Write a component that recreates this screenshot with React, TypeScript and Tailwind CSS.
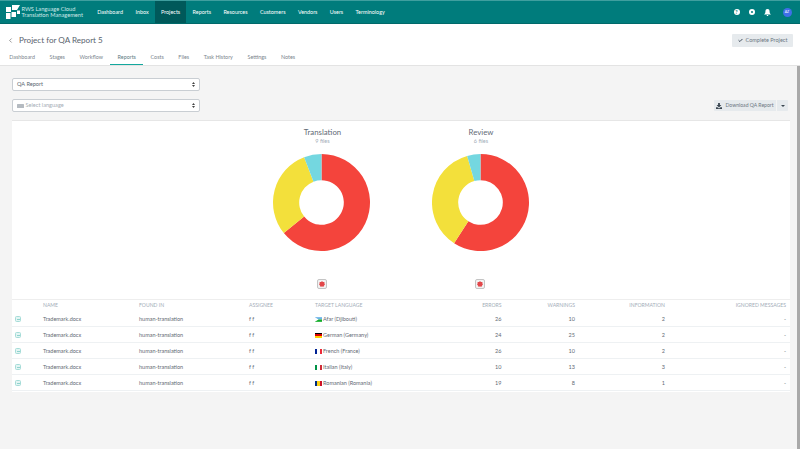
import React from 'react';
import { Check, ChevronLeft } from 'lucide-react';

const navItems = ['Dashboard', 'Inbox', 'Projects', 'Reports', 'Resources', 'Customers', 'Vendors', 'Users', 'Terminology'];
const tabs = ['Dashboard', 'Stages', 'Workflow', 'Reports', 'Costs', 'Files', 'Task History', 'Settings', 'Notes'];

const rows = [
  { flag: 'dj', language: 'Afar (Djibouti)', errors: 26, warnings: 10, info: 2 },
  { flag: 'de', language: 'German (Germany)', errors: 24, warnings: 25, info: 2 },
  { flag: 'fr', language: 'French (France)', errors: 26, warnings: 10, info: 2 },
  { flag: 'it', language: 'Italian (Italy)', errors: 10, warnings: 13, info: 3 },
  { flag: 'ro', language: 'Romanian (Romania)', errors: 19, warnings: 8, info: 1 },
];

// point on a circle, angle in degrees clockwise from the top
const polar = (r: number, deg: number) => {
  const a = (deg * Math.PI) / 180;
  return `${50 + r * Math.sin(a)} ${50 - r * Math.cos(a)}`;
};

const slice = (from: number, to: number) => {
  const large = to - from > 180 ? 1 : 0;
  return `M${polar(50, from)} A50 50 0 ${large} 1 ${polar(50, to)} L${polar(23, to)} A23 23 0 ${large} 0 ${polar(23, from)} Z`;
};

const Donut = ({ title, files, redEnd, yellowEnd }: { title: string; files: string; redEnd: number; yellowEnd: number }) => (
  <div className="w-[97px] flex flex-col items-center">
    <div className="ml-[2px] text-[7.8px] leading-[10px] text-[#5f6b76] whitespace-nowrap">{title}</div>
    <div className="ml-[2px] text-[5.5px] leading-[7px] mt-[1px] text-[#a3adb8] whitespace-nowrap">{files}</div>
    <svg viewBox="0 0 100 100" className="w-[97px] h-[97px] mt-[9px] shrink-0">
      <path d={slice(0, redEnd)} fill="#f4443c" />
      <path d={slice(redEnd, yellowEnd)} fill="#f3e03b" />
      <path d={slice(yellowEnd, 359.99)} fill="#74d7e0" />
    </svg>
    <div className="mt-[28px] w-[10px] h-[10px] rounded-[2px] border border-[#c4c4c4] bg-[#f2f2f2] flex items-center justify-center">
      <svg viewBox="0 0 10 10" className="w-[6px] h-[6px]">
        <path d="M5 0 L6.5 1.5 L9 1.5 L9 4 L10 5.5 L8.5 7.5 L7.5 9.5 L5 9 L2.5 9.5 L1.5 7.5 L0 5.5 L1 4 L1 1.5 L3.5 1.5 Z" fill="#e2474a" />
      </svg>
    </div>
  </div>
);

const Flag = ({ code }: { code: string }) => {
  if (code === 'dj') {
    return (
      <svg viewBox="0 0 12 8" className="w-[7px] h-[5px]">
        <rect width="12" height="4" fill="#6ab2e7" />
        <rect y="4" width="12" height="4" fill="#12ad2b" />
        <path d="M0 0 L6 4 L0 8 Z" fill="#fff" />
      </svg>
    );
  }
  if (code === 'de') {
    return (
      <div className="w-[7px] h-[5px] flex flex-col">
        <div className="flex-1 bg-black" />
        <div className="flex-1 bg-[#dd0000]" />
        <div className="flex-1 bg-[#ffce00]" />
      </div>
    );
  }
  const colors: Record<string, string[]> = {
    fr: ['bg-[#002395]', 'bg-white', 'bg-[#ed2939]'],
    it: ['bg-[#009246]', 'bg-white', 'bg-[#ce2b37]'],
    ro: ['bg-[#002b7f]', 'bg-[#fcd116]', 'bg-[#ce1126]'],
  };
  return (
    <div className="w-[7px] h-[5px] flex">
      {colors[code].map((c) => (
        <div key={c} className={`flex-1 ${c}`} />
      ))}
    </div>
  );
};

const SelectArrows = () => (
  <svg viewBox="0 0 6 10" className="w-[3px] h-[5px]">
    <path d="M3 0 L6 4 H0 Z M3 10 L0 6 H6 Z" fill="#444" />
  </svg>
);

const gridCols = 'grid grid-cols-[31px_96px_110px_66px_100px_86.5px_73.5px_90px_121px_4px] items-center';

export default function App() {
  return (
    <div className="w-[800px] h-[449px] overflow-hidden flex flex-col bg-[#f4f4f4] text-[#4f5a64] antialiased font-['Lato','Open_Sans',sans-serif]">
      {/* Top nav */}
      <div className="h-[24px] shrink-0 bg-[#007c7c] border-t border-t-[#3f9f9f] border-b border-b-[#00696a] flex items-center text-white">
        <div className="w-[91px] pl-[6px] flex items-center gap-[1.5px] shrink-0">
          <svg viewBox="0 0 14 14" className="w-[14px] h-[14px] shrink-0">
            <path d="M0 2 H5 V7 H0 Z M6 0 H14 L11 5 H6 Z M5.5 7 H10 V12 H5.5 Z M0 8 H4.5 V14 H0 Z M11 5.5 H14 V9 H11 Z" fill="#fff" />
          </svg>
          <div className="text-[5.7px] leading-[6.5px] text-[#cfe8e8] whitespace-nowrap">
            RWS Language Cloud
            <br />
            Translation Management
          </div>
        </div>
        <div className="flex h-full">
          {navItems.map((item) => (
            <div
              key={item}
              className={`h-full px-[6.2px] flex items-center text-[5.43px] whitespace-nowrap ${item === 'Projects' ? 'bg-[#00595a]' : ''}`}
            >
              {item}
            </div>
          ))}
        </div>
        <div className="ml-auto flex items-center gap-[9px] pr-[8.5px]">
          <div className="w-[6px] h-[6px] rounded-full bg-white text-[#007c7c] text-[5px] leading-[6px] font-bold text-center">?</div>
          <div className="w-[6px] h-[6px] rounded-full bg-white flex items-center justify-center">
            <div className="w-[2px] h-[2px] rounded-full bg-[#007c7c]" />
          </div>
          <svg viewBox="0 0 10 10" className="w-[7px] h-[7px]">
            <path d="M5 0 C7.5 0 8 2 8 4 C8 6 9 7 10 8 H0 C1 7 2 6 2 4 C2 2 2.5 0 5 0 Z M4 8.5 H6 V10 H4 Z" fill="#fff" />
          </svg>
          <div className="w-[9px] h-[9px] rounded-full bg-[#3f6fe8] text-[3.5px] leading-[9px] text-center ml-[3px]">AZ</div>
        </div>
      </div>

      {/* Project header */}
      <div className="h-[42px] shrink-0 bg-white border-b border-b-[#e3e3e3] flex flex-col">
        <div className="h-[26px] pt-[6px] flex items-center pl-[7px] pr-[7px]">
          <ChevronLeft className="w-[7px] h-[7px] text-[#555]" strokeWidth={2} />
          <div className="ml-[5px] text-[8.1px] text-[#59636d] whitespace-nowrap">Project for QA Report 5</div>
          <div className="ml-auto h-[13px] w-[61px] rounded-[1px] bg-[#e6eaed] flex items-center justify-center gap-[3px] text-[5.5px] text-[#6b7681] whitespace-nowrap">
            <Check className="w-[5px] h-[5px] text-[#1f2d3d]" strokeWidth={4} />
            Complete Project
          </div>
        </div>
        <div className="flex-1 flex pl-[2px]">
          {tabs.map((tab) => (
            <div
              key={tab}
              className={`px-[7.3px] flex items-center text-[5.4px] whitespace-nowrap border-b-[1.5px] ${tab === 'Reports' ? 'text-[#5f7d84] border-b-[#13a89e]' : 'text-[#7b858e] border-b-transparent'}`}
            >
              {tab}
            </div>
          ))}
        </div>
      </div>

      {/* Page body */}
      <div className="flex-1 min-h-0 flex">
        <div className="flex-1 pl-[12px] pr-[7px] pt-[12px] min-w-0">
          <div className="w-[188px] h-[13px] rounded-[2px] border border-[#c9ced3] bg-white flex items-center justify-between px-[4px] text-[5.6px] text-[#5b6670]">
            QA Report
            <SelectArrows />
          </div>
          <div className="mt-[8px] flex items-center justify-between">
            <div className="w-[188px] h-[13px] rounded-[2px] border border-[#c9ced3] bg-white flex items-center px-[4px] text-[5.6px] text-[#a5adb5]">
              <div className="w-[7px] h-[4px] rounded-[0.5px] bg-[#b5bbc1] mr-[1.5px]" />
              Select language
              <div className="ml-auto">
                <SelectArrows />
              </div>
            </div>
            <div className="mr-[2px] h-[11px] flex rounded-[1px] bg-[#e6eaed] text-[5.1px] text-[#6b7681]">
              <div className="w-[62px] flex items-center justify-center gap-[3px] whitespace-nowrap">
                <svg viewBox="0 0 10 10" className="w-[6px] h-[6px]">
                  <path d="M3.5 0 H6.5 V3.5 H9 L5 7.5 L1 3.5 H3.5 Z M0 7 H2.5 L5 9 L7.5 7 H10 V10 H0 Z" fill="#3a4650" />
                </svg>
                Download QA Report
              </div>
              <div className="w-[12px] border-l border-l-[#f4f4f4] flex items-center justify-center">
                <div className="w-0 h-0 border-x-[2px] border-x-transparent border-t-[2px] border-t-[#3a4650]" />
              </div>
            </div>
          </div>

          {/* Report card */}
          <div className="mt-[8px] h-[272px] bg-white border-t border-t-[#e6e6e6]">
            <div className="h-[179px] border-b border-b-[#eeeeee] flex pl-[261px] pt-[6px] gap-[61.5px]">
              <Donut title="Translation" files="9 files" redEnd={231} yellowEnd={339} />
              <Donut title="Review" files="6 files" redEnd={213} yellowEnd={344} />
            </div>
            <div className={`${gridCols} h-[11px] text-[5.1px] text-[#a3adb8] whitespace-nowrap`}>
              <div />
              <div>NAME</div>
              <div>FOUND IN</div>
              <div>ASSIGNEE</div>
              <div>TARGET LANGUAGE</div>
              <div className="text-right">ERRORS</div>
              <div className="text-right">WARNINGS</div>
              <div className="text-right">INFORMATION</div>
              <div className="text-right">IGNORED MESSAGES</div>
            </div>
            {rows.map((row) => (
              <div key={row.flag} className={`${gridCols} h-[16px] pt-[1px] border-b border-b-[#eef1f3] text-[5.5px] text-[#5f6a74] whitespace-nowrap`}>
                <div className="pl-[3px]">
                  <div className="w-[6px] h-[6px] rounded-[1.5px] border border-[#a6dcd8] bg-[#e3f5f3] flex items-center justify-center">
                    <div className="w-[3px] h-[1px] bg-[#8fd3ce]" />
                  </div>
                </div>
                <div>Trademark.docx</div>
                <div>human-translation</div>
                <div>f f</div>
                <div className="flex items-center gap-[1px]">
                  <Flag code={row.flag} />
                  {row.language}
                </div>
                <div className="text-right">{row.errors}</div>
                <div className="text-right">{row.warnings}</div>
                <div className="text-right">{row.info}</div>
                <div className="text-right">-</div>
              </div>
            ))}
          </div>
        </div>
        {/* Scrollbar */}
        <div className="w-[3px] bg-[#a9a9a9] shrink-0" />
      </div>
    </div>
  );
}
